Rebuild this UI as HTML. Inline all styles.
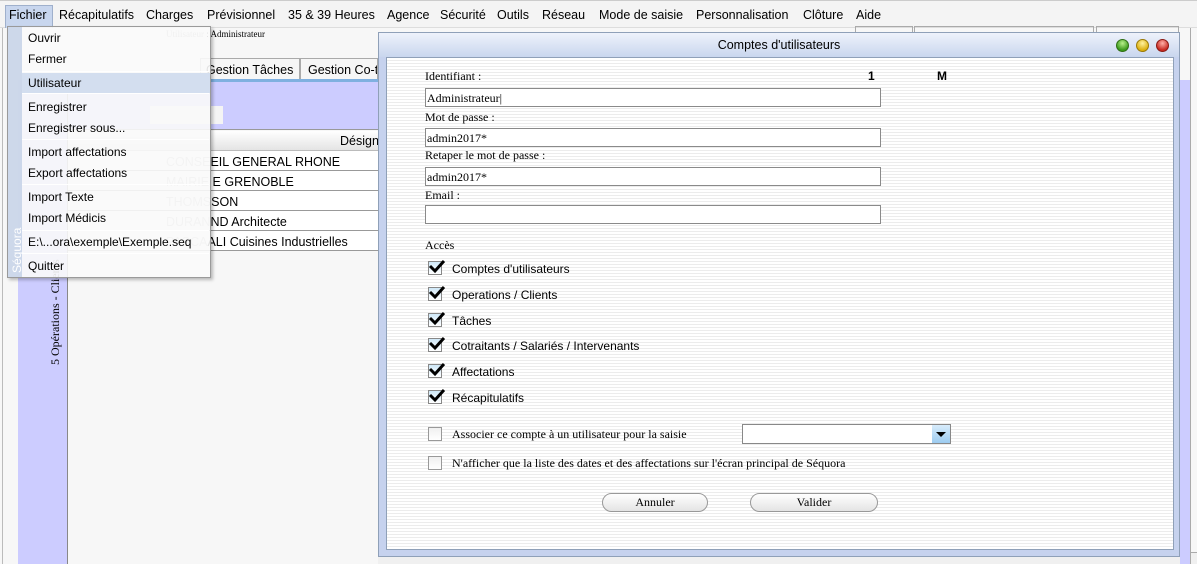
<!DOCTYPE html>
<html><head><meta charset="utf-8"><style>
*{margin:0;padding:0;box-sizing:border-box}
body{width:1197px;height:564px;overflow:hidden;background:#f7f7f7;font-family:"Liberation Sans",sans-serif;font-size:12px;position:relative;color:#000}
.a{position:absolute}
.serif{font-family:"Liberation Serif",serif}
.mb{left:0;top:0;width:1197px;height:28px;background:#f4f4f4;border-bottom:1px solid #ddd;border-top:1px solid #ccc}
.mb span{position:absolute;top:7px;font-size:12.5px}
.stripe{background:repeating-linear-gradient(#ffffff 0 2px,#ececec 2px 3px)}
.inp{position:absolute;left:425px;width:456px;height:19px;background:#fff;border:1px solid #8a8a8a;font-family:"Liberation Serif",serif;font-size:12px;padding:2px 1px}
.lbl{position:absolute;left:425px;font-family:"Liberation Serif",serif;font-size:12px}
.cb{position:absolute;left:428px;width:14px;height:14px;border:1px solid #888;background:linear-gradient(#cfe8f8,#fff)}
.cb svg{position:absolute;left:-1px;top:-4px}
.ct{position:absolute;left:452px;font-size:12px}
.ub{position:absolute;left:428px;width:14px;height:14px;border:1px solid #999;background:linear-gradient(#f0f0f0,#fff)}
.btn{position:absolute;top:493px;height:19px;border:1px solid #999;border-radius:10px;background:linear-gradient(#fff,#e4e4e4);font-family:"Liberation Serif",serif;font-size:12px;text-align:center;line-height:17px}
.mi{position:absolute;left:28px;font-size:12px}
.sep{position:absolute;left:22px;width:187px;height:1px;background:#999;border-bottom:1px solid #fff}
.row{position:absolute;left:68px;width:310px;height:20px;border-bottom:1px solid #999;background:#fff}
</style></head><body>
<div class="a mb">
<div class="a" style="left:5px;top:4px;width:48px;height:23px;background:#c8d6ee;border:1px solid #9fb0cc;border-bottom:none"></div>
<span style="left:9px">Fichier</span><span style="left:59px">Récapitulatifs</span><span style="left:146px">Charges</span><span style="left:207px">Prévisionnel</span><span style="left:288px">35 &amp; 39 Heures</span><span style="left:387px">Agence</span><span style="left:440px">Sécurité</span><span style="left:497px">Outils</span><span style="left:542px">Réseau</span><span style="left:599px">Mode de saisie</span><span style="left:696px">Personnalisation</span><span style="left:803px">Clôture</span><span style="left:856px">Aide</span>
</div>
<div class="a" style="left:2px;top:28px;width:1px;height:536px;background:#bbb"></div>
<div class="a serif" style="left:166px;top:29px;font-size:9px;color:#999">Utilisateur <span style="color:#000">: Administrateur</span></div>
<div class="a" style="left:18px;top:80px;width:50px;height:484px;background:#ccccff;border-right:1px solid #888"></div>
<div class="a serif" style="left:48px;top:365px;transform:rotate(-90deg);transform-origin:0 0;font-size:12px;white-space:nowrap">5 Opérations - Clients</div>
<div class="a" style="left:200px;top:58px;width:100px;height:21px;border:1px solid #aaa;border-bottom:none;background:#f6f6f6;font-size:12.5px;padding:4px 5px">Gestion Tâches</div>
<div class="a" style="left:300px;top:58px;width:78px;height:21px;border:1px solid #aaa;border-bottom:none;background:#f6f6f6;font-size:12.5px;padding:4px 7px;overflow:hidden;white-space:nowrap">Gestion Co-t</div>
<div class="a" style="left:68px;top:79px;width:310px;height:3px;background:#7fb0e0"></div>
<div class="a" style="left:68px;top:82px;width:310px;height:48px;background:#ccccff;border-bottom:1px solid #999"></div>
<div class="a" style="left:150px;top:106px;width:73px;height:18px;background:#f4f4f4"></div>
<div class="a" style="left:68px;top:131px;width:310px;height:20px;background:linear-gradient(#fff,#e4e4e4);border-bottom:1px solid #bbb"></div>
<div class="a" style="left:340px;top:134px;font-size:12.5px">Désign</div>
<div class="row" style="top:151px"></div><div class="row" style="top:171px"></div><div class="row" style="top:191px"></div><div class="row" style="top:211px"></div><div class="row" style="top:231px"></div>
<div class="a" style="left:166px;top:152px;font-size:12.5px;line-height:20px;white-space:pre;color:#bbb">CONSE<span style="color:#000">EIL GENERAL RHONE</span>
MAIRIE <span style="color:#000">E GRENOBLE</span>
THOMS<span style="color:#000">SON</span>
DURAN<span style="color:#000">ND Architecte</span>
PASCA<span style="color:#000">ALI Cuisines Industrielles</span></div>
<div class="a" style="left:378px;top:552px;width:819px;height:12px;background:#f0f0f0;border-top:1px solid #aaa"></div>
<div class="a" style="left:855px;top:26px;width:58px;height:10px;border:1px solid #aaa;border-bottom:none"></div>
<div class="a" style="left:914px;top:26px;width:180px;height:48px;border:1px solid #aaa;border-bottom:none"></div>
<div class="a" style="left:1096px;top:26px;width:83px;height:48px;border:1px solid #aaa;border-bottom:none"></div>
<div class="a" style="left:1190px;top:28px;width:1px;height:536px;background:#aaa"></div>
<div class="a" style="left:1180px;top:80px;width:10px;height:484px;background:#ccccff"></div>
<div class="a" style="left:378px;top:32px;width:802px;height:525px;background:#c6d2ee;border:1px solid #8fa0b8"></div>
<div class="a" style="left:379px;top:33px;width:800px;height:24px;background:linear-gradient(#eef2fb,#c9d6ee)"></div>
<div class="a" style="left:378px;top:38px;width:802px;text-align:center;font-size:12.5px">Comptes d'utilisateurs</div>
<div class="a" style="left:1116px;top:39px;width:13px;height:13px;border-radius:50%;background:radial-gradient(circle at 50% 30%,#b8f08a,#3c9a1c 70%);border:1px solid #2f6e14"></div>
<div class="a" style="left:1136px;top:39px;width:13px;height:13px;border-radius:50%;background:radial-gradient(circle at 50% 30%,#fff2a0,#dcb010 70%);border:1px solid #9a7a08"></div>
<div class="a" style="left:1156px;top:39px;width:13px;height:13px;border-radius:50%;background:radial-gradient(circle at 50% 30%,#ffb0a8,#c82a22 70%);border:1px solid #8a1a14"></div>
<div class="a stripe" style="left:386px;top:57px;width:788px;height:493px;border:1px solid #8fa0b8"></div>
<div class="lbl" style="top:69px">Identifiant :</div>
<div class="a" style="left:868px;top:69px;font-weight:bold;font-size:12px">1</div>
<div class="a" style="left:937px;top:69px;font-weight:bold;font-size:12px">M</div>
<div class="inp" style="top:88px">Administrateur|</div>
<div class="lbl" style="top:110px">Mot de passe :</div>
<div class="inp" style="top:128px">admin2017*</div>
<div class="lbl" style="top:148px">Retaper le mot de passe :</div>
<div class="inp" style="top:167px">admin2017*</div>
<div class="lbl" style="top:188px">Email :</div>
<div class="inp" style="top:205px"></div>
<div class="lbl" style="top:238px">Accès</div>
<div class="cb" style="top:261px"><svg width="18" height="18"><path d="M2 8 L7 13 L16 3" stroke="#000" stroke-width="3" fill="none"/></svg></div><div class="ct" style="top:262px">Comptes d'utilisateurs</div>
<div class="cb" style="top:287px"><svg width="18" height="18"><path d="M2 8 L7 13 L16 3" stroke="#000" stroke-width="3" fill="none"/></svg></div><div class="ct" style="top:288px">Operations / Clients</div>
<div class="cb" style="top:313px"><svg width="18" height="18"><path d="M2 8 L7 13 L16 3" stroke="#000" stroke-width="3" fill="none"/></svg></div><div class="ct" style="top:314px">Tâches</div>
<div class="cb" style="top:338px"><svg width="18" height="18"><path d="M2 8 L7 13 L16 3" stroke="#000" stroke-width="3" fill="none"/></svg></div><div class="ct" style="top:339px">Cotraitants / Salariés / Intervenants</div>
<div class="cb" style="top:364px"><svg width="18" height="18"><path d="M2 8 L7 13 L16 3" stroke="#000" stroke-width="3" fill="none"/></svg></div><div class="ct" style="top:365px">Affectations</div>
<div class="cb" style="top:390px"><svg width="18" height="18"><path d="M2 8 L7 13 L16 3" stroke="#000" stroke-width="3" fill="none"/></svg></div><div class="ct" style="top:391px">Récapitulatifs</div>
<div class="ub" style="top:427px"></div><div class="ct serif" style="top:427px">Associer ce compte à un utilisateur pour la saisie</div>
<div class="a" style="left:742px;top:424px;width:209px;height:20px;background:#fff;border:1px solid #888"></div>
<div class="a" style="left:932px;top:425px;width:18px;height:18px;background:linear-gradient(#d8ecfb,#9ccbf0)"><svg width="18" height="18"><path d="M4 7 L14 7 L9 12Z" fill="#000"/></svg></div>
<div class="ub" style="top:456px"></div><div class="ct serif" style="top:456px">N'afficher que la liste des dates et des affectations sur l'écran principal de Séquora</div>
<div class="btn" style="left:602px;width:106px">Annuler</div>
<div class="btn" style="left:750px;width:128px">Valider</div>
<div class="a" style="left:7px;top:26px;width:204px;height:252px;background:rgba(250,250,250,0.9);border:1px solid #9a9a9a;box-shadow:2px 2px 3px rgba(0,0,0,0.25)"></div>
<div class="a" style="left:8px;top:27px;width:14px;height:250px;background:rgba(200,212,232,0.9)"></div>
<div class="a" style="left:10px;top:273px;transform:rotate(-90deg);transform-origin:0 0;font-size:12px;color:#fff;white-space:nowrap">Séquora</div>
<div class="a" style="left:22px;top:73px;width:188px;height:20px;background:#d3deef"></div>
<div class="mi" style="top:31px">Ouvrir</div>
<div class="mi" style="top:52px">Fermer</div>
<div class="sep" style="top:71px"></div>
<div class="mi" style="top:76px">Utilisateur</div>
<div class="sep" style="top:93px"></div>
<div class="mi" style="top:100px">Enregistrer</div>
<div class="mi" style="top:121px">Enregistrer sous...</div>
<div class="sep" style="top:139px"></div>
<div class="mi" style="top:145px">Import affectations</div>
<div class="mi" style="top:166px">Export affectations</div>
<div class="sep" style="top:184px"></div>
<div class="mi" style="top:190px">Import Texte</div>
<div class="mi" style="top:211px">Import Médicis</div>
<div class="sep" style="top:230px"></div>
<div class="mi" style="top:235px">E:\...ora\exemple\Exemple.seq</div>
<div class="sep" style="top:253px"></div>
<div class="mi" style="top:259px">Quitter</div>
</body></html>
